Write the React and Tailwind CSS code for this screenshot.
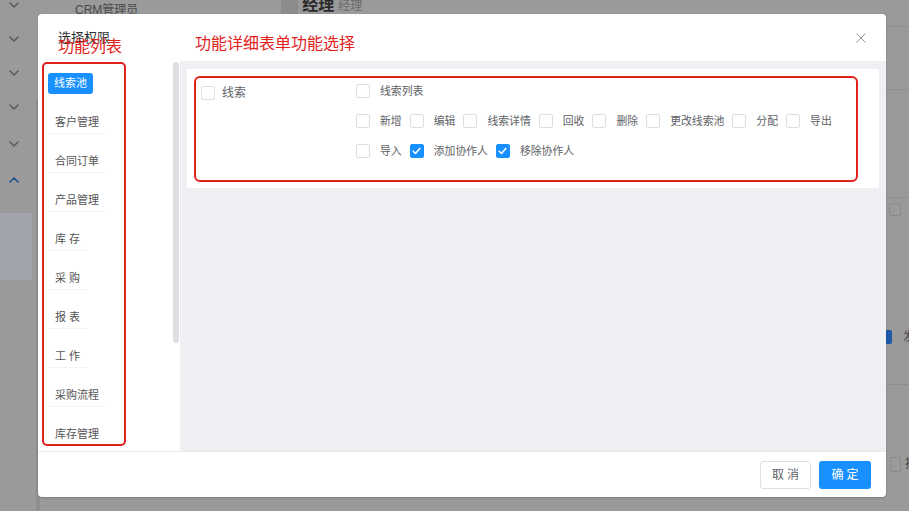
import React from 'react'

const menus = ['线索池', '客户管理', '合同订单', '产品管理', '库 存', '采 购', '报 表', '工 作', '采购流程', '库存管理']

const Check = ({ checked }) => (
  <span
    className={
      'w-[14px] h-[14px] shrink-0 rounded-[2px] border flex items-center justify-center ' +
      (checked ? 'bg-[#1890ff] border-[#1890ff]' : 'bg-white border-[#dcdfe6]')
    }
  >
    {checked && (
      <svg width="9" height="8" viewBox="0 0 9 8" fill="none">
        <path d="M1.2 4.2 L3.5 6.4 L7.8 1.4" stroke="white" strokeWidth="1.5" strokeLinecap="round" strokeLinejoin="round" />
      </svg>
    )}
  </span>
)

const Item = ({ label, checked }) => (
  <div className="flex items-center mr-[8px]">
    <Check checked={checked} />
    <span className="ml-[10px] text-[10.85px] leading-[14px] text-[#606266] whitespace-nowrap">{label}</span>
  </div>
)

const Chevron = ({ up }) => (
  <svg width="10" height="6" viewBox="0 0 10 6" fill="none">
    <path
      d={up ? 'M1 5 L5 1 L9 5' : 'M1 1 L5 5 L9 1'}
      stroke={up ? '#1f4f8f' : '#5c5c5c'}
      strokeWidth="1.6"
      strokeLinecap="round"
      strokeLinejoin="round"
    />
  </svg>
)

const App = () => {
  return (
    <div className="relative w-[909px] h-[511px] overflow-hidden bg-[#9a9a9a] font-['Liberation_Sans','Noto_Sans_CJK_SC',sans-serif]">
      {/* dimmed page behind */}
      <div className="flex h-full">
        <div className="w-[36px] flex flex-col items-center pr-[8px]">
          <div className="mt-[2px]"><Chevron /></div>
          <div className="mt-[28px]"><Chevron /></div>
          <div className="mt-[28px]"><Chevron /></div>
          <div className="mt-[28px]"><Chevron /></div>
          <div className="mt-[31px]"><Chevron /></div>
          <div className="mt-[30px]"><Chevron up /></div>
          <div className="mt-[30px] w-[36px] h-[67px] bg-[#a1a5ab]"></div>
        </div>
        <div className="w-[4px] bg-[#8f8f8f] mt-[100px]"></div>
        <div className="flex-1 relative">
          <div className="flex items-start h-[14px] overflow-hidden">
            <span className="ml-[35px] mt-[3px] text-[12px] leading-[14px] text-[#4a4a4a]">CRM管理员</span>
            <span className="ml-[143px] w-[17px] h-[14px] bg-[#8c8c8c]"></span>
            <span className="ml-[4px] -mt-[3px] text-[16px] leading-[16px] font-bold text-[#2a2a2a]">经理</span>
            <span className="ml-[4px] -mt-[1px] text-[12px] leading-[14px] text-[#6a6a6a]">经理</span>
          </div>
          <div className="absolute right-0 top-0 w-[23px] h-full flex flex-col">
            <div className="h-[27px] border-b border-[#8e8e8e]"></div>
            <div className="h-[63px] border-b border-[#8e8e8e]"></div>
            <div className="h-[108px] border-b border-[#8e8e8e]"></div>
            <div className="pl-[3px] pt-[5px]"><span className="block w-[12px] h-[13px] border border-[#8a8a8a] rounded-[2px]"></span></div>
            <div className="mt-[112px] flex items-center">
              <span className="w-[6px] h-[14px] shrink-0 bg-[#1e5aa8] rounded-r-[2px]"></span>
              <span className="ml-[11px] text-[12px] text-[#4a4a4a]">发</span>
            </div>
            <div className="mt-[38px] border-b border-[#8e8e8e]"></div>
            <div className="mt-[70px] flex items-center pl-[4px]">
              <span className="w-[11px] h-[15px] shrink-0 border border-[#8a8a8a] rounded-[2px]"></span>
              <span className="ml-[4px] text-[12px] text-[#4a4a4a] whitespace-nowrap">批</span>
            </div>
          </div>
        </div>
      </div>

      {/* dialog */}
      <div className="absolute left-[38px] top-[14px] w-[848px] h-[483px] bg-white rounded-[4px] flex flex-col overflow-hidden shadow-[0_1px_2px_rgba(0,0,0,0.2)]">
        <div className="h-[47px] shrink-0 relative">
          <div className="pl-[20px] pt-[16px] text-[13px] leading-[15px] text-[#303133]">选择权限</div>
          <svg className="absolute right-[20px] top-[19px]" width="10" height="10" viewBox="0 0 10 10">
            <path d="M0.5 0.5 L9.5 9.5 M9.5 0.5 L0.5 9.5" stroke="#909399" strokeWidth="1" />
          </svg>
        </div>

        <div className="flex h-[390px] shrink-0">
          <div className="w-[142px] shrink-0 relative pt-[3px]">
            <div className="absolute right-[1px] top-[1px] w-[6px] h-[281px] rounded-[3px] bg-[#dcdee1]"></div>
            {menus.map((m, i) => (
              <div key={m} className="h-[39px] flex items-center pl-[10px]">
                {i === 0 ? (
                  <span className="px-[6px] h-[21px] leading-[21px] rounded-[3px] bg-[#1890ff] text-white text-[11px]">{m}</span>
                ) : (
                  <span className="px-[7px] h-[22px] leading-[20px] text-[11px] text-[#555] border-b border-[#f3f4f5] whitespace-pre">{m}</span>
                )}
              </div>
            ))}
          </div>

          <div className="flex-1 bg-[#eef0f3] pl-[7px] pr-[7px] pt-[8px]">
            <div className="h-[119px] bg-white relative flex pl-[14px] pt-[15px]">
              <div className="w-[155px] shrink-0 flex items-center h-[14px] mt-[2px]">
                <Check />
                <span className="ml-[7px] text-[12px] text-[#606266]">线索</span>
              </div>
              <div className="flex flex-col gap-[16px]">
                <div className="flex h-[14px]">
                  <Item label="线索列表" />
                </div>
                <div className="flex h-[14px]">
                  <Item label="新增" />
                  <Item label="编辑" />
                  <Item label="线索详情" />
                  <Item label="回收" />
                  <Item label="删除" />
                  <Item label="更改线索池" />
                  <Item label="分配" />
                  <Item label="导出" />
                </div>
                <div className="flex h-[14px]">
                  <Item label="导入" />
                  <Item label="添加协作人" checked />
                  <Item label="移除协作人" checked />
                </div>
              </div>
              <div className="absolute left-[7px] top-[7px] w-[664px] h-[106px] border-2 border-[#e3211b] rounded-[6px]"></div>
            </div>
          </div>
        </div>

        <div className="flex-1 border-t border-[#e9eaec] flex items-center justify-end pr-[15px] gap-[8px]">
          <button className="w-[51px] h-[28px] rounded-[3px] border border-[#dcdfe6] bg-white text-[12px] text-[#606266] tracking-[3px] pl-[3px]">取消</button>
          <button className="w-[52px] h-[28px] rounded-[3px] bg-[#1890ff] text-[12px] text-white tracking-[3px] pl-[3px]">确定</button>
        </div>

        {/* annotations */}
        <div className="absolute left-[20px] top-[24px] text-[16px] leading-[18px] text-[#e3211b]">功能列表</div>
        <div className="absolute left-[157px] top-[21px] text-[16px] leading-[18px] text-[#e3211b]">功能详细表单功能选择</div>
        <div className="absolute left-[4px] top-[48px] w-[84px] h-[384px] border-2 border-[#e3211b] rounded-[5px]"></div>
      </div>
    </div>
  )
}

export default App
